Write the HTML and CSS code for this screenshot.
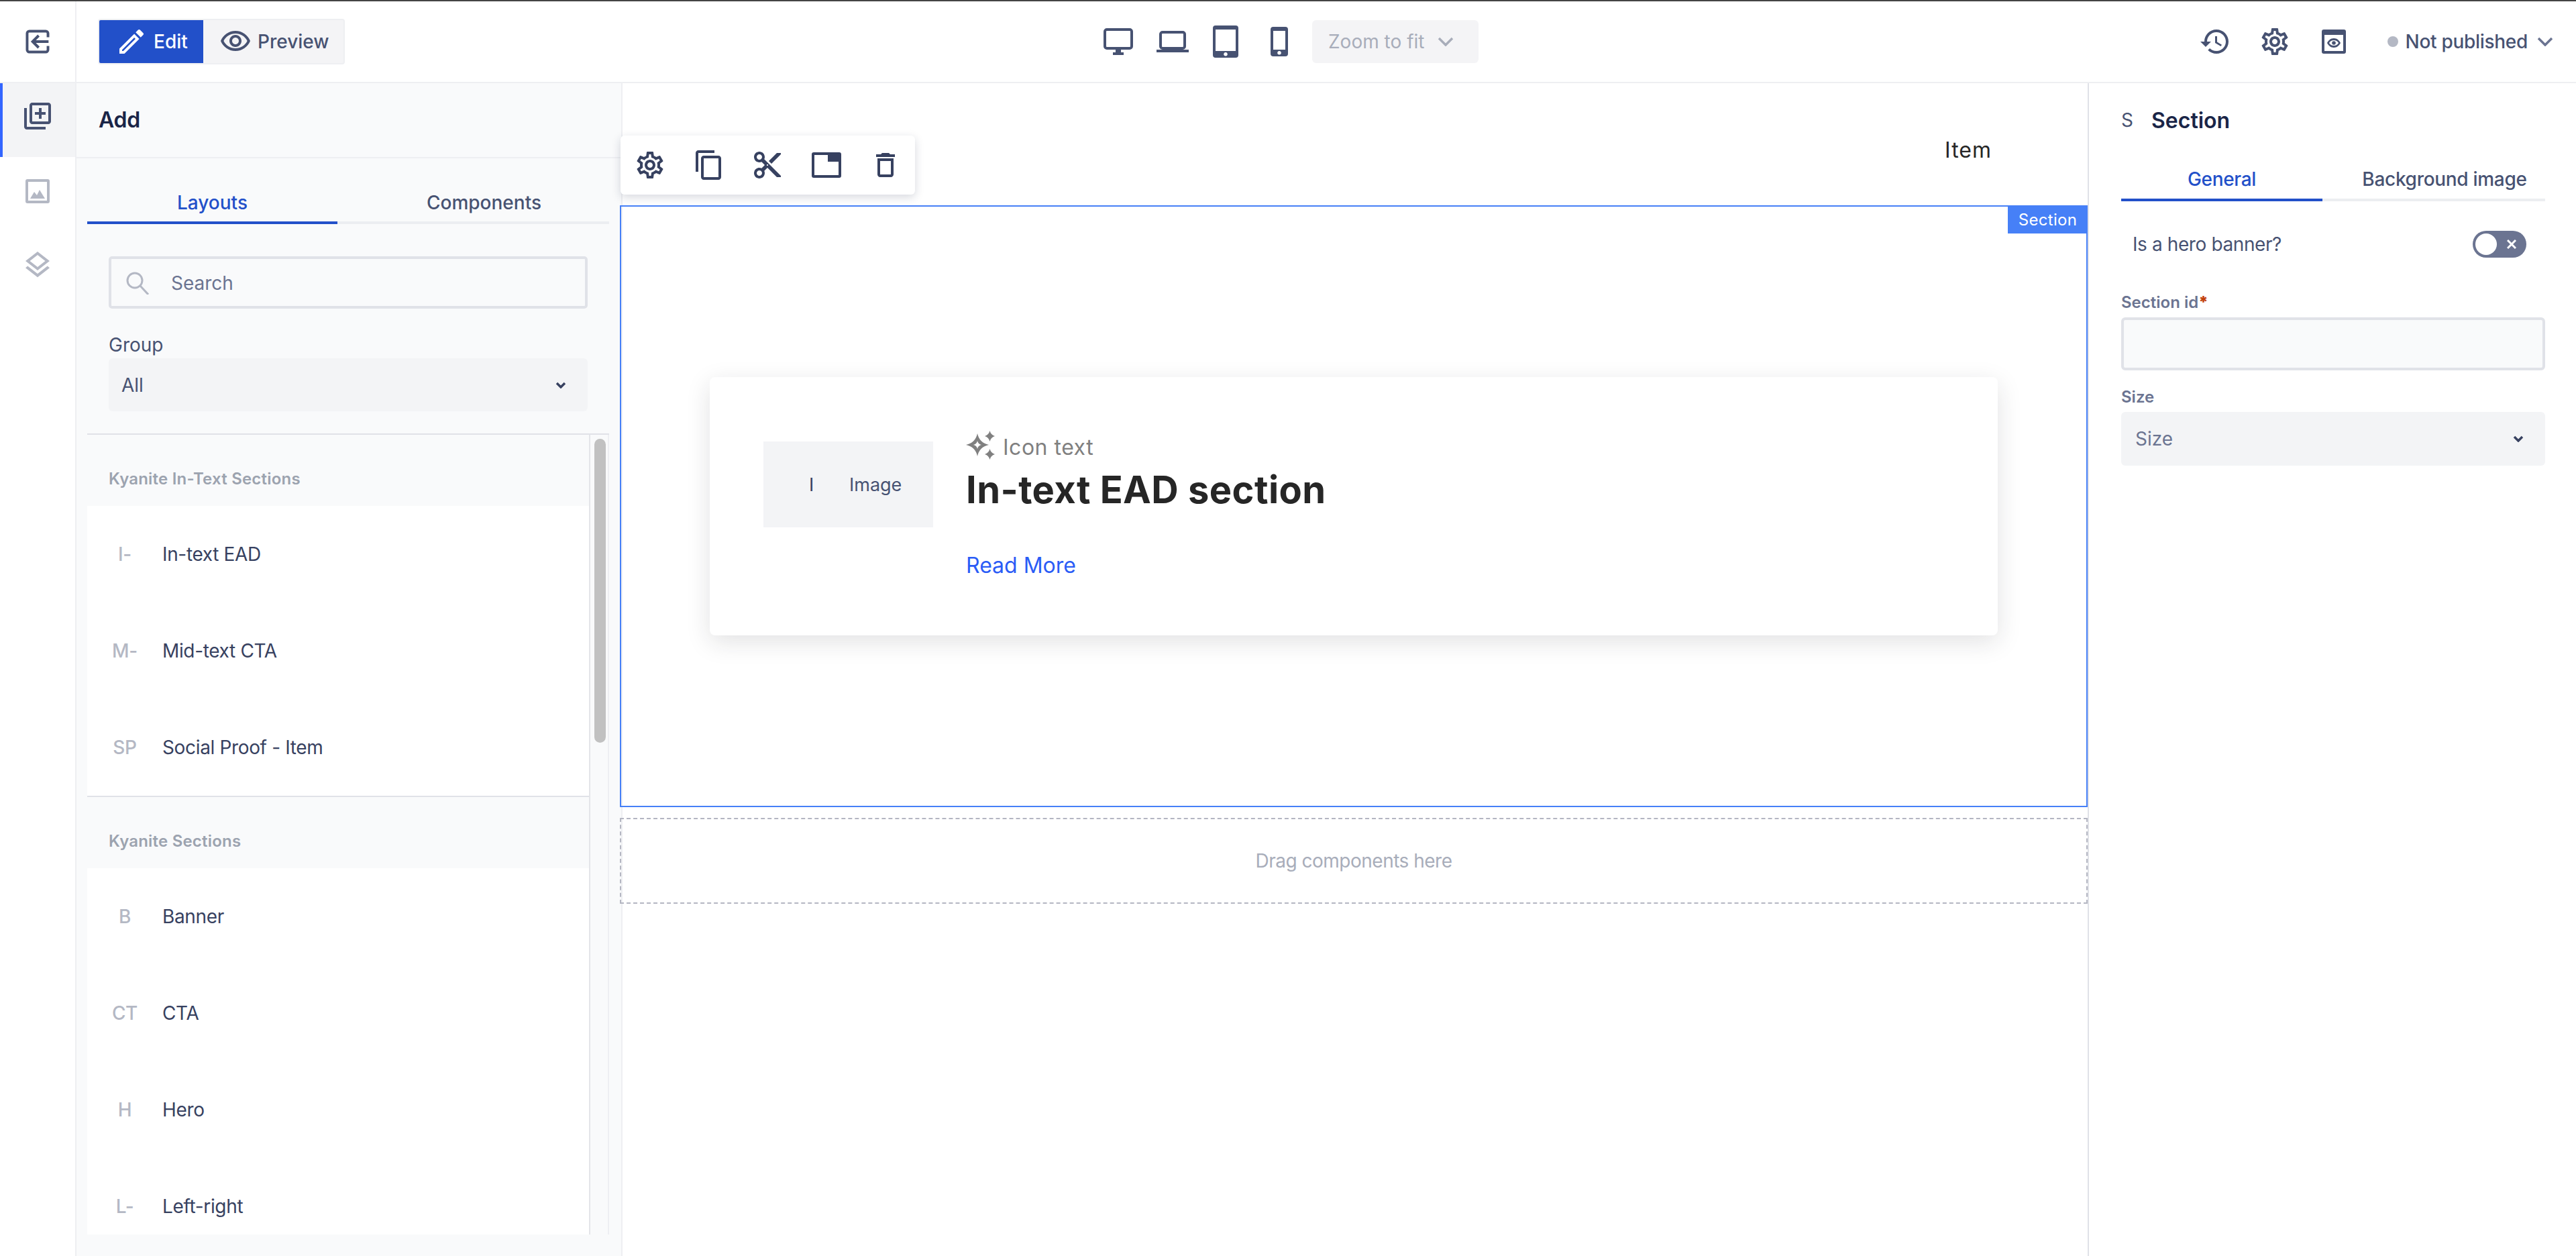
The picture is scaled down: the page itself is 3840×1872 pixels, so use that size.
FILE: index.html
```html
<!DOCTYPE html>
<html lang="en">
<head>
    <meta charset="UTF-8">
    <meta name="viewport" content="width=device-width, initial-scale=1.0">
    <title>Page editor</title>
    <link rel="stylesheet" href="styles.css">
</head>
<body>
    <svg class="defs" width="0" height="0">
        <symbol id="gear" viewBox="0 0 24 24"><path d="M19.43 12.98c.04-.32.07-.64.07-.98 0-.34-.03-.66-.07-.98l2.11-1.65c.19-.15.24-.42.12-.64l-2-3.46c-.09-.16-.26-.25-.44-.25-.06 0-.12.01-.17.03l-2.49 1c-.52-.4-1.08-.73-1.69-.98l-.38-2.65C14.46 2.18 14.25 2 14 2h-4c-.25 0-.46.18-.49.42l-.38 2.65c-.61.25-1.17.59-1.69.98l-2.49-1c-.06-.02-.12-.03-.18-.03-.17 0-.34.09-.43.25l-2 3.46c-.13.22-.07.49.12.64l2.11 1.65c-.04.32-.07.65-.07.98 0 .33.03.66.07.98l-2.11 1.65c-.19.15-.24.42-.12.64l2 3.46c.09.16.26.25.44.25.06 0 .12-.01.17-.03l2.49-1c.52.4 1.08.73 1.69.98l.38 2.65c.03.24.24.42.49.42h4c.25 0 .46-.18.49-.42l.38-2.65c.61-.25 1.17-.59 1.69-.98l2.49 1c.06.02.12.03.18.03.17 0 .34-.09.43-.25l2-3.46c.12-.22.07-.49-.12-.64l-2.11-1.65zm-1.98-1.71c.04.31.05.52.05.73 0 .21-.02.43-.05.73l-.14 1.13.89.7 1.08.84-.7 1.21-1.27-.51-1.04-.42-.9.68c-.43.32-.84.56-1.25.73l-1.06.43-.16 1.13-.2 1.35h-1.4l-.19-1.35-.16-1.13-1.06-.43c-.43-.18-.83-.41-1.23-.71l-.91-.7-1.06.43-1.27.51-.7-1.21 1.08-.84.89-.7-.14-1.13c-.03-.31-.05-.54-.05-.74s.02-.43.05-.73l.14-1.13-.89-.7-1.08-.84.7-1.21 1.27.51 1.04.42.9-.68c.43-.32.84-.56 1.25-.73l1.06-.43.16-1.13.2-1.35h1.39l.19 1.35.16 1.13 1.06.43c.43.18.83.41 1.23.71l.91.7 1.06-.43 1.27-.51.7 1.21-1.07.85-.89.7.14 1.13zM12 8c-2.21 0-4 1.79-4 4s1.79 4 4 4 4-1.79 4-4-1.79-4-4-4zm0 6c-1.1 0-2-.9-2-2s.9-2 2-2 2 .9 2 2-.9 2-2 2z"/></symbol>
    </svg>

    <div class="topline"></div>

    <header class="topbar">
        <div class="topbar-back">
            <svg class="back-icon" viewBox="1 1 22 22"><path d="M21.500 8V4.500a2 2 0 0 0-2-2h-15a2 2 0 0 0-2 2v15a2 2 0 0 0 2 2h15a2 2 0 0 0 2-2V16M22 12H8M13 6.500 7.500 12l5.500 5.500"/></svg>
        </div>
        <div class="mode-toggle">
            <div class="mode mode-active">
                <svg class="icon-36" viewBox="3 3 18 18"><path d="M3 17.25V21h3.75L17.81 9.94l-3.75-3.75L3 17.25zM5.92 19H5v-.92l9.06-9.06.92.92L5.92 19zM20.71 7.04c.39-.39.39-1.02 0-1.41l-2.34-2.34c-.39-.39-1.02-.39-1.41 0l-1.83 1.83 3.75 3.75 1.83-1.83z"/></svg>
                <span>Edit</span>
            </div>
            <div class="mode">
                <svg class="icon-48" viewBox="0 0 24 24"><path d="M12 6c3.79 0 7.17 2.13 8.82 5.5C19.17 14.87 15.79 17 12 17s-7.17-2.13-8.82-5.5C4.83 8.13 8.21 6 12 6m0-2C7 4 2.73 7.11 1 11.5 2.73 15.89 7 19 12 19s9.27-3.11 11-7.5C21.27 7.11 17 4 12 4zm0 5c1.38 0 2.5 1.12 2.5 2.5S13.38 14 12 14s-2.5-1.12-2.5-2.5S10.62 9 12 9m0-2c-2.48 0-4.5 2.02-4.5 4.5S9.52 16 12 16s4.5-2.02 4.5-4.5S14.48 7 12 7z"/></svg>
                <span>Preview</span>
            </div>
        </div>
        <div class="devices">
            <svg class="device device-desktop" viewBox="0 0 44 40"><rect x="2" y="2" width="40" height="28" rx="3"/><path class="solid" d="M18 32h8v4h-8zM14 36h16v4H14z"/></svg>
            <svg class="device device-laptop" viewBox="0 0 48 32"><rect x="6" y="2" width="36" height="24" rx="3"/><path class="solid" d="M0 28h48v4H0z"/></svg>
            <svg class="device device-tablet" viewBox="0 0 38 48"><path class="solid" fill-rule="evenodd" d="M4 0h30a4 4 0 0 1 4 4v40a4 4 0 0 1-4 4H4a4 4 0 0 1-4-4V4a4 4 0 0 1 4-4zM4 6v32h30V6zM19 40a2.800 2.800 0 1 0 .01 0z"/></svg>
            <svg class="device device-phone" viewBox="0 0 26 44"><path class="solid" fill-rule="evenodd" d="M4 0h18a4 4 0 0 1 4 4v36a4 4 0 0 1-4 4H4a4 4 0 0 1-4-4V4a4 4 0 0 1 4-4zM4 6v28h18V6zM13 36a2.800 2.800 0 1 0 .01 0z"/></svg>
            <div class="zoom-select">
                <span>Zoom to fit</span>
                <svg class="chevron" viewBox="0 0 24 14"><path d="M2 2l10 10L22 2"/></svg>
            </div>
        </div>
        <div class="top-actions">
            <svg class="icon-48 action-history" viewBox="0 0 24 24"><path d="M13 3c-4.970 0-9 4.030-9 9H1l3.890 3.890.07.14L9 12H6c0-3.870 3.130-7 7-7s7 3.130 7 7-3.130 7-7 7c-1.930 0-3.680-.79-4.940-2.060l-1.420 1.420C8.270 19.990 10.510 21 13 21c4.970 0 9-4.030 9-9s-4.030-9-9-9zm-1 5v5l4.280 2.540.72-1.210-3.500-2.080V8H12z"/></svg>
            <svg class="icon-48 action-gear"><use href="#gear"/></svg>
            <svg class="action-window" viewBox="0 0 36 36"><path fill-rule="evenodd" d="M3 0h30a3 3 0 0 1 3 3v30a3 3 0 0 1-3 3H3a3 3 0 0 1-3-3V3a3 3 0 0 1 3-3zM4 8v24h28V8zM18 13c4.500 0 8 2.800 10 7-2 4.200-5.500 7-10 7s-8-2.800-10-7c2-4.200 5.500-7 10-7zm0 3c-3 0-5.400 1.500-7 4 1.600 2.500 4 4 7 4s5.400-1.500 7-4c-1.600-2.500-4-4-7-4zm0 1.200a2.800 2.800 0 1 1 0 5.600 2.800 2.800 0 0 1 0-5.600z"/></svg>
            <div class="publish">
                <i class="publish-dot"></i>
                <span>Not published</span>
                <svg class="chevron publish-chevron" viewBox="0 0 24 14"><path d="M2 2l10 10L22 2"/></svg>
            </div>
        </div>
    </header>

    <main class="workspace">
        <nav class="rail">
            <div class="rail-item rail-active">
                <svg class="icon-48" viewBox="0 0 24 24"><path d="M4 6H2v14c0 1.100.9 2 2 2h14v-2H4V6zm16-4H8c-1.100 0-2 .9-2 2v12c0 1.100.9 2 2 2h12c1.100 0 2-.9 2-2V4c0-1.100-.9-2-2-2zm0 14H8V4h12v12zm-7-2h2v-3h3V9h-3V6h-2v3h-3v2h3z"/></svg>
            </div>
            <div class="rail-item">
                <svg class="rail-image" viewBox="0 0 36 36"><path fill-rule="evenodd" d="M3 0h30a3 3 0 0 1 3 3v30a3 3 0 0 1-3 3H3a3 3 0 0 1-3-3V3a3 3 0 0 1 3-3zM4 4v28h28V4zM7 29l6-10 4 5 4-8 8 13z"/></svg>
            </div>
            <div class="rail-item">
                <svg class="icon-48" viewBox="0 0 24 24"><path d="M11.990 18.540l-7.370-5.730L3 14.070l9 7 9-7-1.630-1.270-7.380 5.740zM12 16l7.360-5.730L21 9l-9-7-9 7 1.630 1.270L12 16zm0-11.470L17.740 9 12 13.470 6.260 9 12 4.530z"/></svg>
            </div>
        </nav>

        <aside class="add-panel">
            <div class="panel-head">Add</div>
            <div class="panel-body">
                <div class="tabs">
                    <div class="tab tab-active">Layouts</div>
                    <div class="tab">Components</div>
                </div>
                <div class="filters">
                    <div class="search">
                        <svg class="search-icon" viewBox="0 0 34 34"><circle cx="13" cy="13" r="11"/><path d="M21 21 33 34"/></svg>
                        <span>Search</span>
                    </div>
                    <div class="field-label">Group</div>
                    <div class="select">
                        <span>All</span>
                        <svg class="select-chevron" viewBox="0 0 16 10"><path d="M2 2l6 6 6-6"/></svg>
                    </div>
                </div>
                <div class="list-wrap">
                    <div class="list">
                        <div class="list-group">
                            <div class="group-title">Kyanite In-Text Sections</div>
                            <div class="group-items">
                                <div class="list-item"><span class="initial">I-</span><span>In-text EAD</span></div>
                                <div class="list-item"><span class="initial">M-</span><span>Mid-text CTA</span></div>
                                <div class="list-item"><span class="initial">SP</span><span>Social Proof - Item</span></div>
                            </div>
                        </div>
                        <div class="list-group">
                            <div class="group-title">Kyanite Sections</div>
                            <div class="group-items">
                                <div class="list-item"><span class="initial">B</span><span>Banner</span></div>
                                <div class="list-item"><span class="initial">CT</span><span>CTA</span></div>
                                <div class="list-item"><span class="initial">H</span><span>Hero</span></div>
                                <div class="list-item"><span class="initial">L-</span><span>Left-right</span></div>
                            </div>
                        </div>
                    </div>
                    <div class="scroll-track"><div class="scroll-thumb"></div></div>
                </div>
            </div>
        </aside>

        <section class="canvas">
            <div class="canvas-nav">Item</div>
            <div class="block-toolbar">
                <div class="tool"><svg class="icon-48"><use href="#gear"/></svg></div>
                <div class="tool"><svg class="icon-48" viewBox="0 0 24 24"><path d="M16 1H4c-1.100 0-2 .9-2 2v14h2V3h12V1zm3 4H8c-1.100 0-2 .9-2 2v14c0 1.100.9 2 2 2h11c1.100 0 2-.9 2-2V7c0-1.100-.9-2-2-2zm0 16H8V7h11v14z"/></svg></div>
                <div class="tool"><svg class="icon-48" viewBox="0 0 24 24"><path d="M9.640 7.640c.23-.5.36-1.050.36-1.640 0-2.210-1.790-4-4-4S2 3.790 2 6s1.790 4 4 4c.59 0 1.140-.13 1.640-.36L10 12l-2.360 2.360C7.140 14.130 6.590 14 6 14c-2.210 0-4 1.790-4 4s1.790 4 4 4 4-1.790 4-4c0-.59-.13-1.140-.36-1.640L12 14l7 7h3v-1L9.640 7.640zM6 8c-1.100 0-2-.89-2-2s.9-2 2-2 2 .89 2 2-.9 2-2 2zm0 12c-1.100 0-2-.89-2-2s.9-2 2-2 2 .89 2 2-.9 2-2 2zm6-7.500c-.28 0-.5-.22-.5-.5s.22-.5.5-.5.5.22.5.5-.22.5-.5.5zM19 3l-6 6 2 2 7-7V3h-3z"/></svg></div>
                <div class="tool"><svg class="tool-window" viewBox="0 0 44 38"><path fill-rule="evenodd" d="M3 0h38a3 3 0 0 1 3 3v32a3 3 0 0 1-3 3H3a3 3 0 0 1-3-3V3a3 3 0 0 1 3-3zM4 4v30h36V14H24V4z"/></svg></div>
                <div class="tool"><svg class="icon-48" viewBox="0 0 24 24"><path d="M16 9v10H8V9h8m-1.500-6h-5l-1 1H5v2h14V4h-3.500l-1-1zM18 7H6v12c0 1.100.9 2 2 2h8c1.100 0 2-.9 2-2V7z"/></svg></div>
            </div>

            <div class="selected-section">
                <div class="section-tag">Section</div>
                <div class="card">
                    <div class="card-image"><span class="card-image-initial">I</span><span>Image</span></div>
                    <div class="card-text">
                        <div class="card-eyebrow">
                            <svg class="sparkle" viewBox="0 0 43 43"><path fill-rule="evenodd" d="M17 4Q20 18 34 21 20 24 17 38 14 24 0 21 14 18 17 4zM17 15Q18 20 23 21 18 22 17 27 16 22 11 21 16 20 17 15zM35.500 0Q37 6 43 8 37 10 35.500 16 34 10 28 8 34 6 35.500 0zM35.500 27Q37 33 43 35 37 37 35.500 43 34 37 28 35 34 33 35.500 27z"/></svg>
                            <span>Icon text</span>
                        </div>
                        <h1 class="card-title">In-text EAD section</h1>
                        <a class="card-link">Read More</a>
                    </div>
                </div>
            </div>

            <div class="dropzone">Drag components here</div>
        </section>

        <aside class="props-panel">
            <div class="props-head"><span class="props-initial">S</span><span class="props-title">Section</span></div>
            <div class="tabs props-tabs">
                <div class="tab tab-active">General</div>
                <div class="tab">Background image</div>
            </div>
            <div class="hero-row">
                <span>Is a hero banner?</span>
                <div class="switch">
                    <i class="switch-knob"></i>
                    <svg class="switch-x" viewBox="0 0 14 14"><path d="M1 1l12 12M13 1 1 13"/></svg>
                </div>
            </div>
            <div class="field-label props-label">Section id<b class="required">*</b></div>
            <input class="text-input" type="text">
            <div class="field-label props-label props-size">Size</div>
            <div class="select props-select">
                <span>Size</span>
                <svg class="select-chevron" viewBox="0 0 16 10"><path d="M2 2l6 6 6-6"/></svg>
            </div>
        </aside>
    </main>
</body>
</html>
```

FILE: styles.css
```css
* {
    box-sizing: border-box;
}
body {
    margin: 0;
    height: 1872px;
    overflow: hidden;
    background: #fff;
    font-family: Inter, "Noto Sans", sans-serif;
    font-size: 28px;
    color: #475272;
}
svg {
    display: block;
    flex: none;
    fill: currentColor;
}
.defs {
    position: absolute;
}
.icon-36 {
    width: 36px;
    height: 36px;
}
.icon-48 {
    width: 48px;
    height: 48px;
}
.topline {
    height: 2px;
    background: #444;
}

/* top bar */
.topbar {
    display: flex;
    align-items: center;
    height: 122px;
    border-bottom: 2px solid #eeeff2;
}
.topbar-back {
    display: flex;
    align-items: center;
    justify-content: center;
    width: 114px;
    height: 120px;
    border-right: 2px solid #eeeff2;
}
.back-icon {
    width: 36px;
    height: 36px;
    fill: none;
    stroke: currentColor;
    stroke-width: 2.4;
}
.mode-toggle {
    display: flex;
    width: 368px;
    height: 68px;
    margin-left: 32px;
    border: 2px solid #eeeff2;
    border-radius: 4px;
    background: #f4f4f6;
    font-weight: 500;
}
.mode {
    display: flex;
    align-items: center;
    gap: 9px;
    padding-left: 26px;
    flex: 1;
}
.mode-active {
    flex: none;
    width: 155px;
    gap: 15px;
    padding-left: 30px;
    background: #2250c9;
    color: #fff;
    border-radius: 2px 0 0 2px;
}
.mode .icon-48 {
    margin-left: -2px;
}
.devices {
    display: flex;
    align-items: center;
    margin-left: 1131px;
}
.device {
    fill: none;
    stroke: currentColor;
    stroke-width: 4;
}
.device .solid {
    fill: currentColor;
    stroke: none;
}
.device-desktop {
    width: 44px;
    height: 40px;
}
.device-laptop {
    width: 48px;
    height: 32px;
    margin-left: 35px;
}
.device-tablet {
    width: 38px;
    height: 48px;
    margin-left: 36px;
}
.device-phone {
    width: 26px;
    height: 44px;
    margin-left: 48px;
}
.zoom-select {
    display: flex;
    align-items: center;
    width: 248px;
    height: 64px;
    margin-left: 36px;
    padding-left: 24px;
    border-radius: 6px;
    background: #f4f4f6;
    color: #a8adba;
}
.chevron {
    width: 24px;
    height: 14px;
    margin-left: 20px;
    fill: none;
    stroke: currentColor;
    stroke-width: 3.5;
}
.top-actions {
    display: flex;
    align-items: center;
    margin-left: auto;
}
.action-gear {
    margin-left: 41px;
}
.action-window {
    width: 36px;
    height: 36px;
    margin-left: 46px;
}
.publish {
    display: flex;
    align-items: center;
    margin-left: 62px;
    padding-right: 34px;
    font-weight: 500;
    letter-spacing: -0.3px;
}
.publish-dot {
    width: 16px;
    height: 16px;
    margin-right: 11px;
    border-radius: 50%;
    background: #b4b8c4;
}
.publish-chevron {
    margin-left: 14px;
    color: #6b7491;
}

/* left rail and add panel */
.workspace {
    display: flex;
    height: 1748px;
}
.rail {
    width: 114px;
    flex: none;
    border-right: 2px solid #eeeff2;
}
.rail-item {
    display: flex;
    align-items: center;
    justify-content: center;
    height: 110px;
    padding-bottom: 8px;
    color: #b4b8c4;
}
.rail-active {
    padding-bottom: 12px;
    border-left: 4px solid #3366ff;
    background: #f3f4f6;
    color: #475272;
}
.rail-active .icon-48 {
    margin-left: -4px;
}
.rail-image {
    width: 36px;
    height: 36px;
}
.add-panel {
    width: 814px;
    flex: none;
    border-right: 2px solid #eeeff2;
    background: #f9fafb;
}
.panel-head {
    display: flex;
    align-items: center;
    height: 112px;
    padding: 0 0 2px 33px;
    border-bottom: 2px solid #eeeff2;
    font-size: 32px;
    font-weight: 600;
    letter-spacing: -0.2px;
    color: #1a2547;
}
.panel-body {
    padding: 0 18px 0 16px;
}
.tabs {
    display: grid;
    grid-template-columns: 1fr 1fr;
    column-gap: 32px;
    border-bottom: 4px solid #eceef1;
    font-weight: 500;
}
.tab {
    height: 98px;
    padding-top: 49px;
    margin-bottom: -4px;
    line-height: 34px;
    text-align: center;
    border-bottom: 4px solid transparent;
}
.tab-active {
    color: #2250c9;
    border-bottom-color: #2250c9;
}
.filters {
    padding: 48px 32px 33px;
    border-bottom: 2px solid #e0e2e8;
}
.search {
    display: flex;
    align-items: center;
    height: 78px;
    padding: 2px 0 0 22px;
    border: 4px solid #e0e2e8;
    border-radius: 5px;
    color: #6b7491;
}
.search-icon {
    width: 34px;
    height: 34px;
    margin-right: 33px;
    fill: none;
    stroke: #b4b8c4;
    stroke-width: 3;
}
.field-label {
    height: 34px;
    margin-top: 37px;
    line-height: 34px;
}
.select {
    display: flex;
    align-items: center;
    justify-content: space-between;
    height: 79px;
    margin-top: 3px;
    padding: 0 32px 0 19px;
    border-radius: 6px;
    background: #f3f4f6;
}
.select-chevron {
    width: 16px;
    height: 10px;
    fill: none;
    stroke: #374160;
    stroke-width: 3.5;
}
.list-wrap {
    display: flex;
    height: 1192px;
    overflow: hidden;
    border-right: 2px solid #eeeff2;
}
.list {
    width: 750px;
    flex: none;
    border-right: 2px solid #e4e5e9;
}
.list-group {
    border-bottom: 2px solid #e0e2e8;
}
.group-title {
    display: flex;
    align-items: center;
    height: 106px;
    padding: 24px 0 0 32px;
    font-size: 24px;
    font-weight: 600;
    letter-spacing: 0.2px;
    color: #9ca3af;
}
.group-items {
    background: #fff;
}
.list-item {
    display: flex;
    align-items: center;
    height: 144px;
    letter-spacing: -0.35px;
    color: #374160;
}
.initial {
    width: 112px;
    text-align: center;
    color: #b4b8c4;
    font-weight: 500;
}
.scroll-track {
    flex: 1;
    padding: 6px 3px 0 6px;
}
.scroll-thumb {
    height: 453px;
    border-radius: 9px;
    background: #c1c1c1;
}

/* canvas */
.canvas {
    position: relative;
    width: 2184px;
    flex: none;
}
.canvas-nav {
    display: flex;
    align-items: center;
    justify-content: flex-end;
    height: 182px;
    padding: 16px 143px 0 0;
    font-size: 32px;
    letter-spacing: 1px;
    color: #262626;
}
.block-toolbar {
    position: absolute;
    top: 78px;
    left: -3px;
    display: flex;
    width: 439px;
    height: 88px;
    border-radius: 6px;
    background: #fff;
    box-shadow: 0 4px 14px rgba(30, 40, 70, 0.18);
    color: #374160;
}
.tool {
    display: flex;
    align-items: center;
    justify-content: center;
    width: 88px;
}
.tool-window {
    width: 44px;
    height: 38px;
}
.selected-section {
    position: relative;
    display: flex;
    align-items: center;
    justify-content: center;
    height: 897px;
    margin-left: -4px;
    border: 2px solid #4680f7;
}
.section-tag {
    position: absolute;
    top: -2px;
    right: -2px;
    width: 119px;
    height: 42px;
    line-height: 44px;
    text-align: center;
    background: #4680f7;
    color: #fff;
    font-size: 24px;
    letter-spacing: 0.3px;
}
.card {
    display: flex;
    align-items: flex-start;
    gap: 49px;
    width: 1920px;
    height: 385px;
    padding: 80px;
    border-radius: 8px;
    background: #fff;
    box-shadow: 0 10px 36px rgba(30, 30, 40, 0.13);
}
.card-image {
    display: flex;
    align-items: center;
    width: 253px;
    height: 128px;
    margin-top: 16px;
    padding-left: 68px;
    background: #f3f4f6;
    font-size: 27px;
}
.card-image-initial {
    width: 60px;
    color: #374160;
}
.card-eyebrow {
    display: flex;
    align-items: flex-end;
    gap: 12px;
    height: 43px;
    font-size: 32px;
    line-height: 37px;
    letter-spacing: 0.5px;
    color: #808080;
}
.sparkle {
    width: 43px;
    height: 43px;
}
.card-title {
    margin: 11px 0 0;
    font-size: 56px;
    line-height: 68px;
    font-weight: 700;
    letter-spacing: 0.45px;
    color: #262626;
}
.card-link {
    display: block;
    margin-top: 59px;
    font-size: 32px;
    line-height: 40px;
    color: #2a5cf6;
}
.dropzone {
    display: flex;
    align-items: center;
    justify-content: center;
    height: 128px;
    margin: 16px 0 0 -4px;
    border: 2px dashed #b4b6c2;
    letter-spacing: -0.5px;
    color: #a8adba;
}

/* properties panel */
.props-panel {
    flex: 1;
    padding: 0 46px 0 48px;
    border-left: 2px solid #e0e2e8;
}
.props-head {
    display: flex;
    align-items: center;
    height: 110px;
}
.props-initial {
    width: 45px;
}
.props-title {
    font-size: 32px;
    font-weight: 600;
    color: #1a2547;
}
.props-tabs .tab {
    height: 66px;
    padding-top: 16px;
    letter-spacing: -0.3px;
}
.hero-row {
    display: flex;
    align-items: center;
    justify-content: space-between;
    height: 40px;
    margin-top: 44px;
    padding: 0 28px 0 17px;
    letter-spacing: -0.4px;
    color: #475272;
}
.switch {
    display: flex;
    align-items: center;
    justify-content: space-between;
    width: 80px;
    height: 40px;
    padding: 0 15px 0 4px;
    border-radius: 20px;
    background: #6b7491;
}
.switch-knob {
    width: 32px;
    height: 32px;
    border-radius: 50%;
    background: #fff;
}
.switch-x {
    width: 14px;
    height: 14px;
    fill: none;
    stroke: #fff;
    stroke-width: 3;
}
.props-label {
    height: 32px;
    margin-top: 49px;
    line-height: 35px;
    font-size: 24px;
    font-weight: 600;
    color: #6b7491;
}
.required {
    color: #c2410c;
}
.text-input {
    display: block;
    width: 100%;
    height: 79px;
    margin-top: 8px;
    border: 4px solid #e0e2e8;
    border-radius: 6px;
    background: #f9fafb;
}
.props-size {
    margin-top: 22px;
}
.props-select {
    height: 80px;
    margin-top: 8px;
    padding: 0 32px 0 21px;
    color: #6b7491;
}
```
